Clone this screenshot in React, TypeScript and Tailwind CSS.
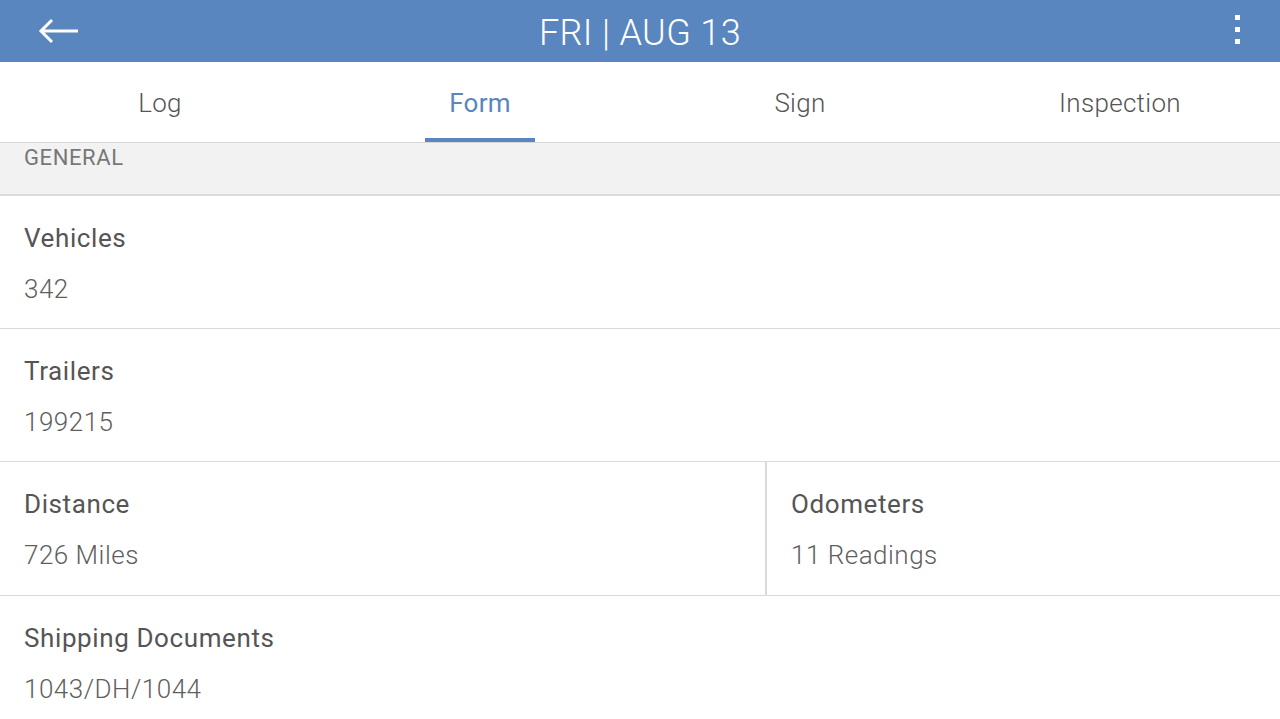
import React from "react";

const tabs = ["Log", "Form", "Sign", "Inspection"];

function Field({ label, value, className = "" }: { label: string; value: string; className?: string }) {
  return (
    <div className={`h-[133px] pl-6 pt-[25px] ${className}`}>
      <div className="text-[26px] leading-[34px] tracking-[0.6px] text-[#555555]">{label}</div>
      <div className="mt-[17px] text-[26px] leading-[34px] tracking-[0.5px] font-light text-[#5f5f5f]">{value}</div>
    </div>
  );
}

export default function App() {
  return (
    <div className="w-[1280px] h-[719px] overflow-hidden bg-white font-['Roboto',sans-serif]">
      {/* top bar */}
      <div className="relative h-[62px] bg-[#5986be] flex items-center justify-center">
        <svg className="absolute left-[37px] top-[17px]" width="44" height="28" viewBox="0 0 44 28" fill="none">
          <path d="M41 14H4M15 3L4 14l11 11" stroke="white" strokeWidth="3" />
        </svg>
        <span className="text-[36px] font-light text-white leading-none tracking-[0.4px] pt-[3px]">FRI | AUG 13</span>
        <div className="absolute right-[40px] top-[15px] flex flex-col gap-[7px]">
          <div className="w-[5px] h-[5px] bg-white" />
          <div className="w-[5px] h-[5px] bg-white" />
          <div className="w-[5px] h-[5px] bg-white" />
        </div>
      </div>

      {/* tabs */}
      <div className="h-[81px] flex border-b border-[#d8d8d8]">
        {tabs.map((t) => (
          <div key={t} className="flex-1 relative flex items-center justify-center pt-[3px]">
            <span
              className={`text-[26px] tracking-[0.3px] ${
                t === "Form" ? "text-[#5986be]" : "font-light text-[#555555]"
              }`}
            >
              {t}
            </span>
            {t === "Form" && <div className="absolute bottom-0 left-[105px] w-[110px] h-[4px] bg-[#5986be]" />}
          </div>
        ))}
      </div>

      {/* section header */}
      <div className="h-[53px] bg-[#f2f2f2] border-b-2 border-[#dcdcdc] pl-6">
        <span className="block text-[22px] leading-[30px] tracking-[0.6px] text-[#777777]">GENERAL</span>
      </div>

      <Field label="Vehicles" value="342" className="border-b border-[#dadada]" />
      <Field label="Trailers" value="199215" className="border-b border-[#dadada]" />
      <div className="flex border-b border-[#dadada]">
        <Field label="Distance" value="726 Miles" className="w-[767px] border-r-2 border-[#dadada]" />
        <Field label="Odometers" value="11 Readings" className="flex-1" />
      </div>
      <Field label="Shipping Documents" value="1043/DH/1044" />
    </div>
  );
}
